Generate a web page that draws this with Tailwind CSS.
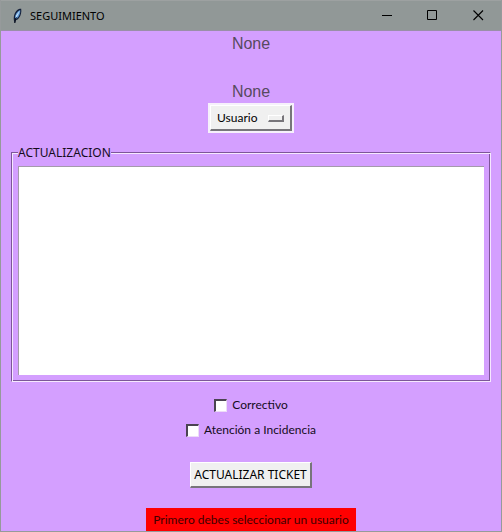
<!DOCTYPE html>
<html lang="es">
<head>
<meta charset="utf-8">
<meta name="viewport" content="width=device-width, initial-scale=1">
<title>SEGUIMIENTO</title>
<script src="https://cdn.jsdelivr.net/npm/@tailwindcss/browser@4"></script>
</head>
<body class="flex min-h-screen flex-col border border-t-0 border-[#969a9b] bg-[#d49fff] font-['Lato','Noto_Sans',sans-serif] text-[12px] leading-4 text-[#150c1c]">
  <header class="flex h-[31px] shrink-0 items-center border-t border-b border-t-[#9da1a1] border-b-[#9a8fa8] bg-[#919897] pl-2 text-black">
    <svg class="h-4 w-4 shrink-0" viewBox="0 0 16 16" aria-hidden="true">
      <path d="M5.500 14.500C4 10.500 4.800 6 7.200 3C8.500 1.400 10 .8 12.200.8C12.700 4 12 7.500 10 10C8.800 11.500 7.500 12 6.800 12.500L6.200 15Z" fill="#14203a"/>
      <path d="M6 10C6 7 7.500 3.800 11.200 2C11.500 5 10.500 8.500 7.500 10.800Z" fill="#5c96d4"/>
      <path d="M6.600 8L10.800 2.500L9.500 6L7.500 9.500Z" fill="#c3e0f5"/>
      <path d="M5.700 15L6.500 11L7.500 9.500" fill="none" stroke="#0b111c"/>
    </svg>
    <h1 class="ml-[5px] flex-1 font-['Noto_Sans',sans-serif] text-[11px]">SEGUIMIENTO</h1>
    <button type="button" aria-label="Minimizar" class="flex h-full w-[45px] items-center justify-center"><svg class="h-[11px] w-[11px]" viewBox="0 0 11 11" fill="none" stroke="#000"><path d="M0 5.500H10"/></svg></button>
    <button type="button" aria-label="Maximizar" class="flex h-full w-[45px] items-center justify-center"><svg class="h-[11px] w-[11px]" viewBox="0 0 11 11" fill="none" stroke="#000"><path d="M.5.500H9.500V9.500H.5Z"/></svg></button>
    <button type="button" aria-label="Cerrar" class="flex h-full w-[46px] items-center justify-center"><svg class="h-[11px] w-[11px]" viewBox="0 0 11 11" fill="none" stroke="#000" stroke-width="1.100"><path d="M.5.500L10 10M10 .5L.5 10"/></svg></button>
  </header>
  <main class="flex flex-1 flex-col items-center">
    <p class="pt-px font-['Liberation_Sans',sans-serif] text-[16px] leading-6 text-[#574a60]">None</p>
    <p class="mt-6 font-['Liberation_Sans',sans-serif] text-[16px] leading-6 text-[#574a60]">None</p>
    <div class="relative -mt-px border-2 border-[#f6f0fb]">
      <select aria-label="Usuario" class="block h-[26px] w-[82px] appearance-none border-t border-r-2 border-b-2 border-l border-t-white border-r-[#77757a] border-b-[#77757a] border-l-white bg-[#f0f0f0] pl-[6px] text-[12px] text-black"><option>Usuario</option></select>
      <span class="pointer-events-none absolute top-[10px] right-[8px] h-[7px] w-[16px] border-t border-r-2 border-b-2 border-l border-t-white border-r-[#77757a] border-b-[#77757a] border-l-white"></span>
    </div>
    <div class="mt-3 w-full px-[10px]">
      <fieldset class="border border-t-[#7d5699] border-r-[#f6e8ff] border-b-[#f6e8ff] border-l-[#7d5699] px-[6px] pt-[6px] pb-[6px] shadow-[inset_1px_1px_#f6e8ff,inset_-1px_-1px_#7d5699]">
        <legend class="bg-[#d49fff] font-['Noto_Sans',sans-serif] leading-[15px]"><label for="actualizacion">ACTUALIZACION</label></legend>
        <textarea id="actualizacion" class="block h-[209px] w-full resize-none border-t border-l border-[#a49aab] bg-white p-1 outline-none"></textarea>
      </fieldset>
    </div>
    <label class="mt-[15px] flex items-center gap-[5px]"><input type="checkbox" class="h-[13px] w-[13px] appearance-none border-t-2 border-r border-b border-l-2 border-t-[#4b4352] border-r-[#eddcf8] border-b-[#eddcf8] border-l-[#4b4352] bg-white">Correctivo</label>
    <label class="mt-[9px] flex items-center gap-[5px]"><input type="checkbox" class="h-[13px] w-[13px] appearance-none border-t-2 border-r border-b border-l-2 border-t-[#4b4352] border-r-[#eddcf8] border-b-[#eddcf8] border-l-[#4b4352] bg-white">Atención a Incidencia</label>
    <button type="button" class="mt-6 h-[26px] border-t border-r-2 border-b-2 border-l border-t-white border-r-[#77757a] border-b-[#77757a] border-l-white bg-[#f0f0f0] px-[3px] font-['Noto_Sans',sans-serif] text-black">ACTUALIZAR TICKET</button>
    <p role="alert" class="mt-5 bg-[#ff0000] px-[7px] pt-1 pb-[3px] text-[#400000]">Primero debes seleccionar un usuario</p>
  </main>
</body>
</html>
